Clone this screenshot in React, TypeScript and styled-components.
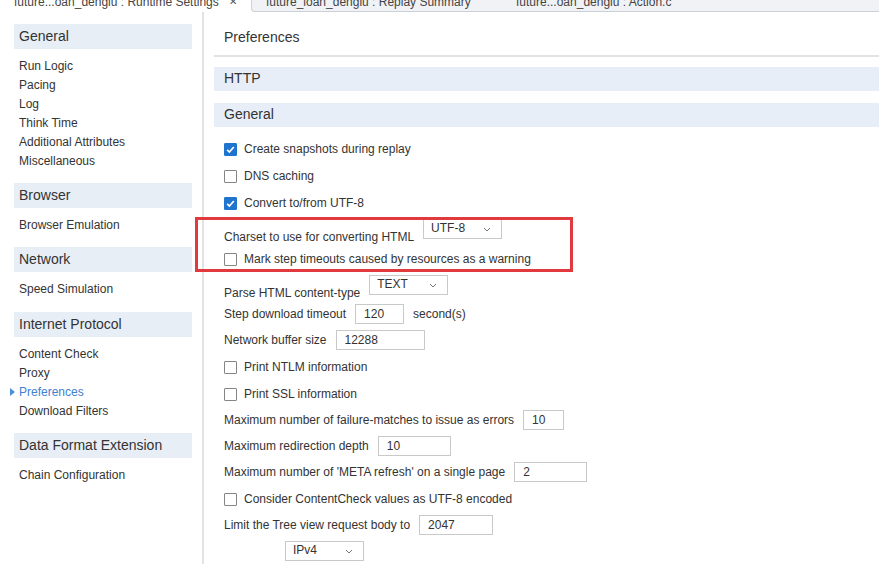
import styled, { createGlobalStyle } from "styled-components";

const GlobalStyle = createGlobalStyle`
  html, body {
    margin: 0;
    padding: 0;
    background: #fff;
  }
  body {
    font-family: "Liberation Sans", Arial, sans-serif;
    font-size: 12px;
    color: #333;
    overflow: hidden;
  }
`;

const sideGroups = [
  {
    title: "General",
    items: ["Run Logic", "Pacing", "Log", "Think Time", "Additional Attributes", "Miscellaneous"],
  },
  { title: "Browser", items: ["Browser Emulation"] },
  { title: "Network", items: ["Speed Simulation"] },
  {
    title: "Internet Protocol",
    items: ["Content Check", "Proxy", "Preferences", "Download Filters"],
  },
  { title: "Data Format Extension", items: ["Chain Configuration"] },
];

function CheckBox({ checked }: { checked?: boolean }) {
  return (
    <Box $checked={checked}>
      {checked && (
        <svg width="11" height="11" viewBox="0 0 11 11">
          <polyline
            points="2.2,5.8 4.4,8 8.8,3"
            fill="none"
            stroke="#fff"
            strokeWidth="1.7"
          />
        </svg>
      )}
    </Box>
  );
}

function Chevron() {
  return (
    <svg width="8" height="5" viewBox="0 0 8 5">
      <polyline points="1,1 4,4 7,1" fill="none" stroke="#777" strokeWidth="1" />
    </svg>
  );
}

function App() {
  return (
    <Page>
      <GlobalStyle />
      <TabStrip>
        <ActiveTab>
          <TabText>future...oan_dengiu : Runtime Settings</TabText>
          <Close>✕</Close>
        </ActiveTab>
        <TabRest>
          <TabLabel>future_loan_dengiu : Replay Summary</TabLabel>
          <TabLabel>future...oan_dengiu : Action.c</TabLabel>
        </TabRest>
      </TabStrip>

      <Body>
        <Sidebar>
          {sideGroups.map((g) => (
            <Group key={g.title}>
              <GroupHeader>{g.title}</GroupHeader>
              {g.items.map((it) => (
                <SideItem key={it} $active={it === "Preferences"}>
                  {it}
                </SideItem>
              ))}
            </Group>
          ))}
        </Sidebar>

        <Main>
          <Title>Preferences</Title>
          <Divider />
          <Bar>HTTP</Bar>
          <Bar $gap>General</Bar>

          <Form>
            <CheckRow>
              <CheckBox checked />
              Create snapshots during replay
            </CheckRow>
            <CheckRow>
              <CheckBox />
              DNS caching
            </CheckRow>
            <CheckRow>
              <CheckBox checked />
              Convert to/from UTF-8
            </CheckRow>

            <Highlighted>
              <SelectRow>
                <Label>Charset to use for converting HTML</Label>
                <Select $width={79}>
                  UTF-8
                  <Chevron />
                </Select>
              </SelectRow>
              <CheckRow>
                <CheckBox />
                Mark step timeouts caused by resources as a warning
              </CheckRow>
              <RedBox />
            </Highlighted>

            <SelectRow>
              <Label>Parse HTML content-type</Label>
              <Select $width={79}>
                TEXT
                <Chevron />
              </Select>
            </SelectRow>
            <FieldRow>
              Step download timeout
              <Input $width={49}>120</Input>
              second(s)
            </FieldRow>
            <FieldRow>
              Network buffer size
              <Input $width={89}>12288</Input>
            </FieldRow>
            <CheckRow>
              <CheckBox />
              Print NTLM information
            </CheckRow>
            <CheckRow>
              <CheckBox />
              Print SSL information
            </CheckRow>
            <FieldRow>
              Maximum number of failure-matches to issue as errors
              <Input $width={41}>10</Input>
            </FieldRow>
            <FieldRow>
              Maximum redirection depth
              <Input $width={73}>10</Input>
            </FieldRow>
            <FieldRow>
              Maximum number of 'META refresh' on a single page
              <Input $width={73}>2</Input>
            </FieldRow>
            <CheckRow>
              <CheckBox />
              Consider ContentCheck values as UTF-8 encoded
            </CheckRow>
            <FieldRow>
              Limit the Tree view request body to
              <Input $width={74}>2047</Input>
            </FieldRow>
            <SelectRow>
              <Select $width={79} $indent={61}>
                IPv4
                <Chevron />
              </Select>
            </SelectRow>
          </Form>
        </Main>
      </Body>
    </Page>
  );
}

const Page = styled.div`
  height: 564px;
  display: flex;
  flex-direction: column;
  overflow: hidden;
`;

const TabStrip = styled.div`
  display: flex;
  height: 12px;
  flex-shrink: 0;
  overflow: hidden;
  color: #444;
`;

const ActiveTab = styled.div`
  width: 251px;
  padding-left: 14px;
  box-sizing: border-box;
  display: flex;
  background: #fff;
`;

const TabText = styled.span`
  line-height: 12px;
  margin-top: -4.5px;
  white-space: nowrap;
`;

const Close = styled.span`
  font-size: 10px;
  line-height: 12px;
  margin: -4px 0 0 10px;
  color: #555;
`;

const TabRest = styled.div`
  flex: 1;
  display: flex;
  background: #f0f2f5;
  border: 1px solid #cbd1d8;
  border-top: none;
  border-right: none;
  border-bottom-left-radius: 4px;
  box-sizing: border-box;
`;

const TabLabel = styled.span`
  width: 250px;
  padding-left: 14px;
  box-sizing: border-box;
  line-height: 12px;
  margin-top: -4.5px;
  white-space: nowrap;
`;

const Body = styled.div`
  flex: 1;
  display: flex;
  min-height: 0;
`;

const Sidebar = styled.div`
  width: 204px;
  flex-shrink: 0;
  box-sizing: border-box;
  padding: 12px 10px 0 14px;
  border-right: 2px solid #e3e3e3;
`;

const Group = styled.div`
  & + & {
    margin-top: 12.2px;
  }
`;

const GroupHeader = styled.div`
  height: 25px;
  line-height: 25px;
  padding-left: 5px;
  margin-bottom: 8px;
  background: #e8eef6;
  font-size: 14px;
  color: #333;
`;

const SideItem = styled.div<{ $active?: boolean }>`
  position: relative;
  line-height: 19px;
  padding-left: 5px;
  color: ${(p) => (p.$active ? "#3f80cf" : "#333")};

  ${(p) =>
    p.$active &&
    `
    &::before {
      content: "";
      position: absolute;
      left: -4px;
      top: 5px;
      border-left: 5px solid #4a8fd8;
      border-top: 4.5px solid transparent;
      border-bottom: 4.5px solid transparent;
    }
  `}
`;

const Main = styled.div`
  flex: 1;
  min-width: 0;
  padding-left: 10px;
`;

const Title = styled.div`
  margin-top: 15px;
  padding-left: 10px;
  line-height: 20px;
  font-size: 14px;
  color: #333;
`;

const Divider = styled.div`
  margin-top: 8px;
  height: 2px;
  background: #e3e3e3;
`;

const Bar = styled.div<{ $gap?: boolean }>`
  margin-top: ${(p) => (p.$gap ? "12px" : "9.5px")};
  height: 24px;
  line-height: 23px;
  padding-left: 10px;
  background: #e8eef7;
  font-size: 14px;
  color: #333;
`;

const Form = styled.div`
  margin-top: 8px;
  padding-left: 10px;
`;

const CheckRow = styled.div`
  height: 27px;
  box-sizing: border-box;
  padding-top: 2px;
  display: flex;
  align-items: center;
  gap: 7px;
  white-space: nowrap;
`;

const Box = styled.span<{ $checked?: boolean }>`
  width: 13px;
  height: 13px;
  box-sizing: border-box;
  display: flex;
  align-items: center;
  justify-content: center;
  border: 1px solid ${(p) => (p.$checked ? "#1e74cf" : "#858585")};
  background: ${(p) => (p.$checked ? "#1e74cf" : "#fff")};
  border-radius: 1px;
`;

const FieldRow = styled.div`
  height: 26px;
  display: flex;
  align-items: center;
  gap: 9px;
  white-space: nowrap;
`;

const Input = styled.div<{ $width: number }>`
  width: ${(p) => p.$width}px;
  height: 20px;
  box-sizing: border-box;
  border: 1px solid #c9c9c9;
  padding-left: 8px;
  line-height: 18px;
  color: #333;
`;

const SelectRow = styled.div`
  height: 29px;
  display: flex;
  align-items: flex-start;
  gap: 9px;
  white-space: nowrap;
`;

const Label = styled.span`
  align-self: flex-end;
  line-height: 14px;
  margin-bottom: 1px;
`;

const Select = styled.div<{ $width: number; $indent?: number }>`
  width: ${(p) => p.$width}px;
  height: 20px;
  margin-top: 3.5px;
  margin-left: ${(p) => p.$indent ?? 0}px;
  box-sizing: border-box;
  border: 1px solid #c9c9c9;
  padding: 0 10px 0 7px;
  display: flex;
  align-items: flex-start;
  justify-content: space-between;
  line-height: 16px;
  color: #333;

  svg {
    margin-top: 7px;
  }
`;

const Highlighted = styled.div`
  position: relative;
`;

const RedBox = styled.div`
  position: absolute;
  left: -29px;
  top: 1.5px;
  width: 378px;
  height: 55px;
  box-sizing: border-box;
  border: 3px solid #e0393e;
  pointer-events: none;
`;

export default App;
